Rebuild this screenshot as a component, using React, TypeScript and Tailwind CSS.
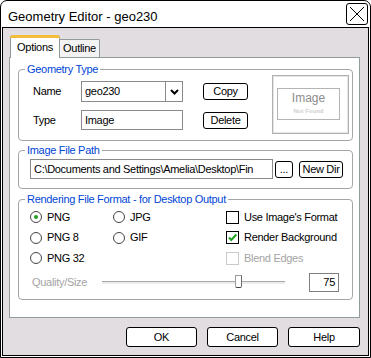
import React from 'react';

function Btn({ children, className = '' }: { children: React.ReactNode; className?: string }) {
  return (
    <button
      className={`bg-white border border-black rounded-[3px] flex items-center justify-center leading-none ${className}`}
    >
      {children}
    </button>
  );
}

function Radio({ label, checked = false }: { label: string; checked?: boolean }) {
  return (
    <div className="flex items-center">
      <span className="w-[12px] h-[12px] rounded-full border border-[#454545] bg-white flex items-center justify-center">
        {checked && <span className="w-[4px] h-[4px] rounded-full bg-[#21a121]" />}
      </span>
      <span className="ml-[5px]">{label}</span>
    </div>
  );
}

function Check({ label, checked = false, disabled = false }: { label: string; checked?: boolean; disabled?: boolean }) {
  return (
    <div className="flex items-center">
      <span
        className={`w-[13px] h-[13px] border bg-white flex items-center justify-center ${
          disabled ? 'border-[#cacaca]' : 'border-black'
        }`}
      >
        {checked && (
          <svg width="11" height="11" viewBox="0 0 11 11">
            <path d="M2 5.5L4.3 8L9.3 2.5" fill="none" stroke="#21a121" strokeWidth="2" />
          </svg>
        )}
      </span>
      <span className={`ml-[5px] ${disabled ? 'text-[#a4a4a4]' : ''}`}>{label}</span>
    </div>
  );
}

function Group({ title, children, className = '' }: { title: string; children: React.ReactNode; className?: string }) {
  return (
    <fieldset className={`border border-[#a5a5a5] rounded-[4px] ${className}`}>
      <legend className="ml-[6px] px-[2px] text-[#0046d5] leading-[12px]">{title}</legend>
      {children}
    </fieldset>
  );
}

export default function App() {
  return (
    <div className="w-[371px] h-[358px] bg-white font-['Liberation_Sans',Arial,sans-serif] text-[11px] tracking-[-0.3px] leading-[13px] text-black">
      <div className="w-full h-full border border-black rounded-t-[7px] flex flex-col">
        {/* title bar */}
        <div className="h-[26px] shrink-0 flex items-start justify-between pl-[7px] pr-[2px]">
          <span className="mt-[8px] text-[13px] leading-[15px] tracking-normal">Geometry Editor - geo230</span>
          <button className="mt-[2px] w-[22px] h-[22px] border border-black rounded-[3px] bg-white flex items-center justify-center">
            <svg width="16" height="16" viewBox="0 0 16 16">
              <path d="M1 1L15 15M15 1L1 15" stroke="black" strokeWidth="1" />
            </svg>
          </button>
        </div>

        {/* client */}
        <div className="flex-1 mx-[1px] mb-[1px] border border-black bg-[#e1dde1] pt-[7px] pl-[6px] pr-[8px]">
          {/* tabs */}
          <div className="h-[22px] flex items-end pl-[1px]">
            <div className="relative z-10 -mb-px w-[50px] h-[23px] bg-white border-x border-[#919b9c] rounded-t-[3px] flex flex-col">
              <div className="h-[3px] -mx-px bg-[#f3bd3b] rounded-t-[3px]" />
              <div className="flex-1 flex items-center justify-center pb-[2px]">Options</div>
            </div>
            <div className="w-[40px] h-[18px] bg-[#f4f3f4] border-t border-r border-[#919b9c] rounded-tr-[2px] flex items-center justify-center">
              Outline
            </div>
          </div>

          {/* panel */}
          <div className="h-[261px] bg-white border border-[#919b9c] pt-[5px] pl-[8px] pr-[6px]">
            <Group title="Geometry Type">
              <div className="h-[65px] flex pl-[14px]">
                <div className="flex flex-col pt-[6px] gap-[8px]">
                  <div className="flex items-center h-[21px]">
                    <span className="w-[48px]">Name</span>
                    <div className="w-[102px] h-[21px] border border-[#8a8a8a] bg-white flex items-center">
                      <span className="flex-1 pl-[3px]">geo230</span>
                      <span className="w-[17px] h-[19px] border-l border-[#8a8a8a] flex items-center justify-center">
                        <svg width="9" height="6" viewBox="0 0 9 6">
                          <path d="M1 1L4.5 4.5L8 1" fill="none" stroke="black" strokeWidth="2" />
                        </svg>
                      </span>
                    </div>
                    <Btn className="ml-[20px] w-[45px] h-[17px]">Copy</Btn>
                  </div>
                  <div className="flex items-center h-[20px]">
                    <span className="w-[48px]">Type</span>
                    <div className="w-[102px] h-[20px] border border-[#8a8a8a] bg-white flex items-center pl-[3px]">
                      Image
                    </div>
                    <Btn className="ml-[20px] w-[45px] h-[17px]">Delete</Btn>
                  </div>
                </div>
                <div className="ml-[24px] w-[77px] h-[59px] border border-[#b0b0b0] shadow-[inset_0_0_0_1px_#e6e6e6] pt-[12px] pl-[4px]">
                  <div className="w-[63px] h-[32px] border border-[#b4b4b4] flex flex-col items-center pt-[2px]">
                    <span className="text-[12px] leading-[14px] text-[#8c8c8c] tracking-normal">Image</span>
                    <span className="mt-[3px] text-[6px] leading-[7px] font-bold text-[#cfcfcf] tracking-normal">Not Found</span>
                  </div>
                </div>
              </div>
            </Group>

            <Group title="Image File Path" className="mt-[3px]">
              <div className="h-[32px] pl-[11px] pt-[3px]">
                <div className="flex items-center h-[20px]">
                  <div className="w-[243px] h-[20px] border border-[#8a8a8a] bg-white flex items-center pl-[3px] overflow-hidden whitespace-nowrap">
                    {'C:\\Documents and Settings\\Amelia\\Desktop\\Fin'}
                  </div>
                  <Btn className="ml-[2px] w-[18px] h-[17px]">...</Btn>
                  <Btn className="ml-[6px] w-[44px] h-[17px]">New Dir</Btn>
                </div>
              </div>
            </Group>

            <Group title="Rendering File Format - for Desktop Output" className="mt-[4px]">
              <div className="h-[94px] pl-[11px] pt-[2px]">
                <div className="flex">
                  <div className="w-[83px] flex flex-col">
                    <div className="h-[20px] flex items-center"><Radio label="PNG" checked /></div>
                    <div className="h-[21px] flex items-center"><Radio label="PNG 8" /></div>
                    <div className="h-[20px] flex items-center"><Radio label="PNG 32" /></div>
                  </div>
                  <div className="w-[113px] flex flex-col">
                    <div className="h-[20px] flex items-center"><Radio label="JPG" /></div>
                    <div className="h-[21px] flex items-center"><Radio label="GIF" /></div>
                  </div>
                  <div className="flex flex-col">
                    <div className="h-[20px] flex items-center"><Check label="Use Image's Format" /></div>
                    <div className="h-[21px] flex items-center"><Check label="Render Background" checked /></div>
                    <div className="h-[20px] flex items-center"><Check label="Blend Edges" disabled /></div>
                  </div>
                </div>
                <div className="mt-[5px] h-[19px] flex items-center pl-[2px]">
                  <span className="w-[70px] text-[#a4a4a4]">Quality/Size</span>
                  <div className="relative w-[183px] h-[3px] border-t border-[#a8a8a8] bg-[#ececec]">
                    <div className="absolute left-[133px] top-[-7px] w-[7px] h-[13px] bg-white border border-[#9a9a9a] border-b-[#404040] border-r-[#6a6a6a] rounded-b-[2px]" />
                  </div>
                  <div className="ml-[24px] w-[30px] h-[19px] border border-[#7f7f7f] bg-white flex items-center justify-end pr-[3px]">
                    75
                  </div>
                </div>
              </div>
            </Group>
          </div>

          {/* bottom buttons */}
          <div className="mt-[9px] flex justify-end gap-[10px]">
            <Btn className="w-[71px] h-[20px]">OK</Btn>
            <Btn className="w-[71px] h-[20px]">Cancel</Btn>
            <Btn className="w-[72px] h-[20px]">Help</Btn>
          </div>
        </div>
      </div>
    </div>
  );
}
